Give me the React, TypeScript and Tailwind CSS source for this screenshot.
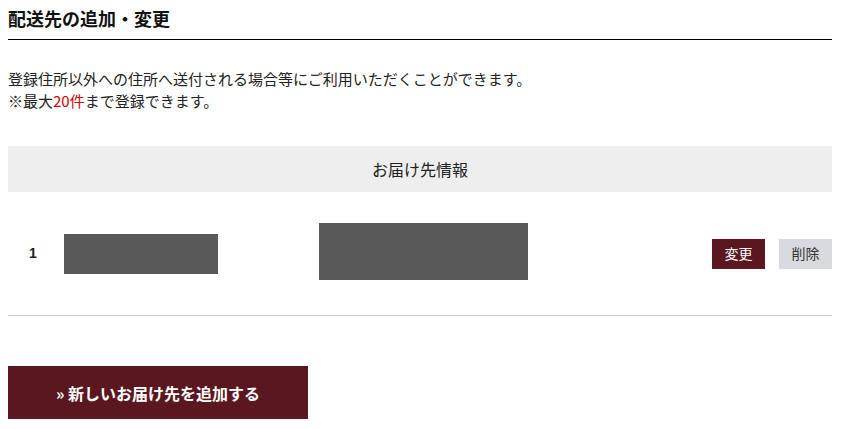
export default function App() {
  const font = { fontFamily: '"Noto Sans CJK JP", "Noto Sans", sans-serif' };
  return (
    <div className="bg-white w-[842px] h-[429px] pl-2 pr-[10px] text-[#222]" style={font}>
      <div className="pt-[3px] pb-[6px] border-b border-black">
        <h1 className="text-[18px] leading-[30px] font-bold text-[#111]">配送先の追加・変更</h1>
      </div>
      <div className="mt-[28px] text-[15px] leading-[22px]">
        <p>登録住所以外への住所へ送付される場合等にご利用いただくことができます。</p>
        <p>
          ※最大<span className="text-[#cc0000]">20件</span>まで登録できます。
        </p>
      </div>
      <div className="mt-[34px] h-[46px] bg-[#eeeeee] flex items-center justify-center text-[16px]">
        お届け先情報
      </div>
      <div className="h-[124px] border-b border-[#cccccc] flex items-center">
        <div className="w-[56px] pl-[21px] text-[14px] font-bold" style={{ fontFamily: '"Liberation Sans", Arial, sans-serif' }}>1</div>
        <div className="w-[154px] h-[40px] bg-[#595959]"></div>
        <div className="w-[101px]"></div>
        <div className="w-[209px] h-[57px] mb-[4px] bg-[#595959]"></div>
        <div className="flex-1"></div>
        <div className="flex gap-[14px]">
          <button className="w-[53px] h-[30px] bg-[#5a1720] text-white text-[14px]">変更</button>
          <button className="w-[53px] h-[30px] bg-[#d9dadf] text-[#333] text-[14px]">削除</button>
        </div>
      </div>
      <button className="mt-[50px] w-[300px] h-[53px] bg-[#5a1720] text-white text-[16px] font-bold flex items-center justify-center">
        » 新しいお届け先を追加する
      </button>
    </div>
  );
}
